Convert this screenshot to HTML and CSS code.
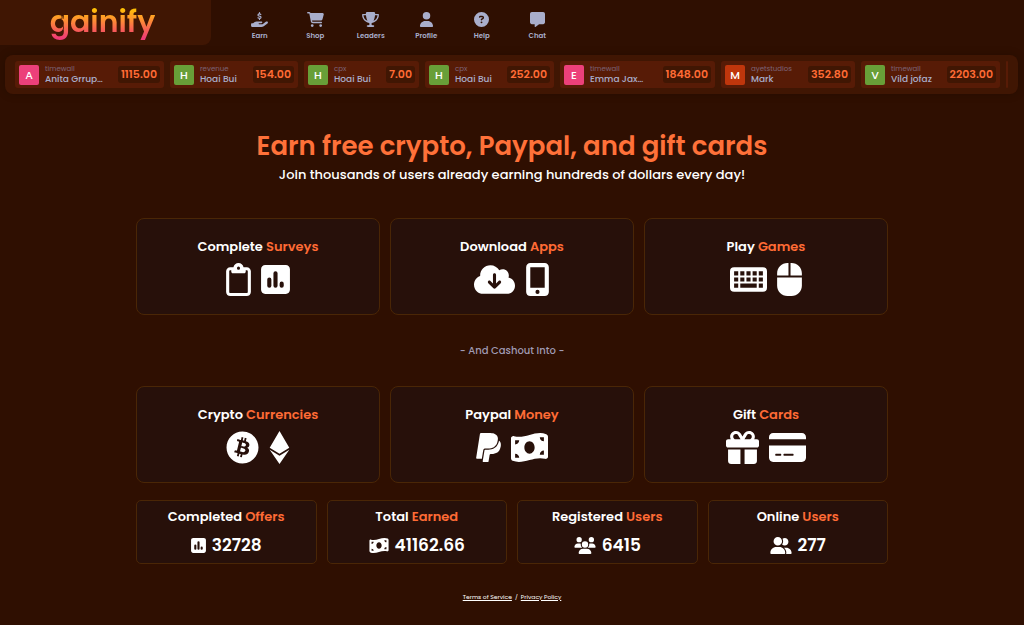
FILE: index.html
```html
<!DOCTYPE html>
<html lang="en">
<head>
<meta charset="utf-8">
<meta name="viewport" content="width=device-width, initial-scale=1">
<title>gainify</title>
<link rel="stylesheet" href="styles.css">
</head>
<body>
<svg class="sprite" aria-hidden="true">
  <symbol id="clipboard" viewBox="0 0 384 512"><path d="M280 64h40c35.300 0 64 28.700 64 64V448c0 35.300-28.700 64-64 64H64c-35.300 0-64-28.700-64-64V128C0 92.700 28.700 64 64 64h49.600C121 27.500 153.300 0 192 0s71 27.500 78.400 64H280zM64 112c-8.800 0-16 7.200-16 16V448c0 8.800 7.200 16 16 16H320c8.800 0 16-7.200 16-16V128c0-8.800-7.200-16-16-16H304v24c0 13.300-10.700 24-24 24H104c-13.300 0-24-10.700-24-24V112H64zm128-8a24 24 0 1 0 0-48 24 24 0 1 0 0 48z"/></symbol>
  <symbol id="poll" viewBox="0 0 448 512"><path fill-rule="evenodd" d="M448 96c0-35.300-28.700-64-64-64H64C28.700 32 0 60.700 0 96V416c0 35.300 28.700 64 64 64H384c35.300 0 64-28.700 64-64V96zM256 160v192a32 32 0 0 1-64 0V160a32 32 0 0 1 64 0zM160 256v96a32 32 0 0 1-64 0v-96a32 32 0 0 1 64 0zM352 320v32a32 32 0 0 1-64 0v-32a32 32 0 0 1 64 0z"/></symbol>
  <symbol id="cloud" viewBox="0 0 640 512"><path fill-rule="evenodd" d="M144 480C64.500 480 0 415.500 0 336c0-62.800 40.200-116.200 96.200-135.900c-.1-2.700-.2-5.400-.2-8.100c0-88.400 71.600-160 160-160c59.300 0 111 32.200 138.700 80.200C409.900 102 428.300 96 448 96c53 0 96 43 96 96c0 12.200-2.300 23.800-6.400 34.600C596 238.400 640 290.100 640 352c0 70.700-57.300 128-128 128H144zm79-167l80 80c9.400 9.400 24.600 9.400 33.900 0l80-80c9.400-9.400 9.400-24.600 0-33.900s-24.600-9.400-33.900 0l-39 39V184c0-13.300-10.700-24-24-24s-24 10.700-24 24V318.100l-39-39c-9.400-9.400-24.600-9.400-33.900 0s-9.400 24.600 0 33.900z"/></symbol>
  <symbol id="phone" viewBox="0 0 384 512"><path fill-rule="evenodd" d="M16 64C16 28.700 44.700 0 80 0H304c35.300 0 64 28.700 64 64V448c0 35.300-28.700 64-64 64H80c-35.300 0-64-28.700-64-64V64zM224 448a32 32 0 1 0-64 0 32 32 0 1 0 64 0zM304 64H80V384H304V64z"/></symbol>
  <symbol id="keyboard" viewBox="0 0 576 512"><path fill-rule="evenodd" d="M64 64H512a64 64 0 0 1 64 64V384a64 64 0 0 1-64 64H64a64 64 0 0 1-64-64V128a64 64 0 0 1 64-64zM64 128v64h64v-64zM160 128v64h64v-64zM256 128v64h64v-64zM352 128v64h64v-64zM448 128v64h64v-64zM64 224v64h64v-64zM160 224v64h64v-64zM256 224v64h64v-64zM352 224v64h64v-64zM448 224v64h64v-64zM64 320v64h64v-64zM160 320v64h256v-64zM448 320v64h64v-64z"/></symbol>
  <symbol id="mouse" viewBox="0 0 384 512"><path d="M0 192H176V0H160C71.600 0 0 71.600 0 160v32zm0 32V352c0 88.400 71.600 160 160 160h64c88.400 0 160-71.600 160-160V224H0zm384-32V160C384 71.600 312.400 0 224 0H208V192H384z"/></symbol>
  <symbol id="bitcoin" viewBox="0 0 512 512"><path d="M504 256c0 136.967-111.033 248-248 248S8 392.967 8 256 119.033 8 256 8s248 111.033 248 248zm-141.651-35.330c4.937-32.999-20.191-50.739-54.550-62.573l11.146-44.702-27.213-6.781-10.851 43.524c-7.154-1.783-14.502-3.464-21.803-5.130l10.929-43.810-27.198-6.781-11.153 44.686c-5.922-1.349-11.735-2.682-17.377-4.084l.031-.14-37.530-9.370-7.239 29.062s20.191 4.627 19.765 4.913c11.022 2.751 13.014 10.044 12.680 15.825l-12.696 50.925c.76.194 1.744.473 2.829.907-.907-.225-1.876-.473-2.876-.713l-17.796 71.338c-1.349 3.348-4.767 8.370-12.471 6.464.271.395-19.780-4.937-19.780-4.937l-13.510 31.147 35.414 8.827c6.588 1.651 13.045 3.379 19.400 5.006l-11.262 45.213 27.182 6.781 11.153-44.733a1038.209 1038.209 0 0 0 21.687 5.627l-11.115 44.523 27.213 6.781 11.262-45.128c46.404 8.781 81.299 5.239 95.986-36.727 11.834-33.790-.589-53.281-25.004-65.991 17.780-4.098 31.174-15.792 34.747-39.949zm-62.177 87.179c-8.410 33.790-65.308 15.523-83.755 10.943l14.944-59.899c18.446 4.603 77.600 13.717 68.811 48.956zm8.417-87.667c-7.673 30.736-55.031 15.120-70.393 11.292l13.548-54.327c15.363 3.828 64.836 10.973 56.845 43.035z"/></symbol>
  <symbol id="ethereum" viewBox="0 0 320 512"><path d="M311.900 260.800L160 353.600 8 260.800 160 0l151.900 260.800zM160 383.400L8 290.600 160 512l152-221.400-152 92.800z"/></symbol>
  <symbol id="paypal" viewBox="0 0 384 512"><path d="M111.400 295.900c-3.500 19.200-17.400 108.700-21.500 134-.3 1.800-1 2.500-3 2.500H12.300c-7.600 0-13.100-6.600-12.100-13.900L58.800 46.600c1.500-9.600 10.100-16.900 20-16.900 152.300 0 165.100-3.700 204 11.400 60.100 23.300 65.600 79.500 44 140.300-21.500 62.600-72.500 89.500-140.100 90.300-43.400.7-69.500-7-75.300 24.200zM357.100 152c-1.800-1.300-2.500-1.800-3 1.300-2 11.400-5.100 22.500-8.800 33.600-39.900 113.800-150.500 103.900-204.500 103.900-6.100 0-10.100 3.300-10.900 9.400-22.600 140.400-27.100 169.700-27.100 169.700-1 7.100 3.500 12.900 10.600 12.900h63.500c8.600 0 15.700-6.300 17.400-14.900.7-5.400-1.100 6.100 14.400-91.300 4.600-22 14.300-19.700 29.300-19.700 71 0 126.400-28.800 142.900-112.300 6.500-34.800 4.600-71.400-23.800-92.600z"/></symbol>
  <symbol id="bill" viewBox="0 0 576 512"><path fill-rule="evenodd" d="M0 112.500V422.300c0 18 10.100 35 27 41.300c87 32.500 174 10.300 261-11.900c79.800-20.300 159.600-40.700 239.300-18.900c23 6.300 48.700-9.500 48.700-33.400V89.700c0-18-10.100-35-27-41.300C462 15.900 375 38.100 288 60.300C208.200 80.600 128.400 100.900 48.700 79.100C25.600 72.800 0 88.600 0 112.500zM288 352c-44.200 0-80-43-80-96s35.800-96 80-96s80 43 80 96s-35.800 96-80 96zM64 352c35.300 0 64 28.700 64 64H64V352zm64-208c0 35.300-28.700 64-64 64V144h64zM512 304v64H448c0-35.300 28.700-64 64-64zM448 96h64v64c-35.300 0-64-28.700-64-64z"/></symbol>
  <symbol id="gift" viewBox="0 0 512 512"><path d="M190.500 68.800L225.300 128H152c-22.100 0-40-17.900-40-40s17.900-40 40-40h2.200c14.900 0 28.800 7.900 36.300 20.800zM64 88c0 14.400 3.500 28 9.600 40H32c-17.700 0-32 14.300-32 32v64c0 17.700 14.300 32 32 32H480c17.700 0 32-14.300 32-32V160c0-17.700-14.300-32-32-32H438.400c6.100-12 9.600-25.600 9.600-40c0-48.600-39.400-88-88-88h-2.200c-31.900 0-61.500 16.900-77.700 44.400L256 85.500l-24.100-41C215.700 16.900 186.100 0 154.200 0H152C103.400 0 64 39.400 64 88zm336 0c0 22.100-17.900 40-40 40H286.700l34.800-59.200C329.100 55.900 342.900 48 357.800 48H360c22.100 0 40 17.900 40 40zM32 288V464c0 26.500 21.500 48 48 48H224V288H32zM288 512H432c26.500 0 48-21.500 48-48V288H288V512z"/></symbol>
  <symbol id="card" viewBox="0 0 576 512"><path fill-rule="evenodd" d="M64 32C28.700 32 0 60.700 0 96v32H576V96c0-35.300-28.700-64-64-64H64zM576 224H0V416c0 35.300 28.700 64 64 64H512c35.300 0 64-28.700 64-64V224zM112 352h64c8.800 0 16 7.200 16 16s-7.200 16-16 16H112c-8.800 0-16-7.200-16-16s7.200-16 16-16zm112 16c0-8.800 7.200-16 16-16H368c8.800 0 16 7.200 16 16s-7.200 16-16 16H240c-8.800 0-16-7.200-16-16z"/></symbol>
  <symbol id="users" viewBox="0 0 640 512"><path d="M144 0a80 80 0 1 1 0 160A80 80 0 1 1 144 0zM512 0a80 80 0 1 1 0 160A80 80 0 1 1 512 0zM0 298.700C0 239.800 47.800 192 106.700 192h42.700c15.900 0 31 3.500 44.600 9.700c-1.300 7.200-1.900 14.700-1.900 22.300c0 38.200 16.800 72.500 43.300 96H21.300C9.600 320 0 310.400 0 298.700zM404.600 320c26.600-23.500 43.300-57.800 43.300-96c0-7.600-.7-15-1.900-22.300c13.600-6.300 28.700-9.700 44.600-9.700h42.700C592.200 192 640 239.800 640 298.700c0 11.800-9.600 21.300-21.300 21.300H404.600zM224 224a96 96 0 1 1 192 0 96 96 0 1 1-192 0zM128 485.300C128 411.700 187.700 352 261.300 352H378.700C452.300 352 512 411.700 512 485.300c0 14.700-11.900 26.700-26.700 26.700H154.700c-14.700 0-26.700-11.900-26.700-26.700z"/></symbol>
  <symbol id="group" viewBox="0 0 640 512"><path d="M96 128a128 128 0 1 1 256 0A128 128 0 1 1 96 128zM0 482.300C0 383.800 79.800 304 178.300 304h91.400C368.200 304 448 383.800 448 482.300c0 16.400-13.300 29.700-29.700 29.700H29.700C13.300 512 0 498.700 0 482.300zM609.300 512H471.400c5.400-9.400 8.600-20.300 8.600-32v-8c0-60.700-27.100-115.200-69.800-151.800c2.400-.1 4.700-.2 7.100-.2h61.400C567.800 320 640 392.200 640 481.300c0 17-13.800 30.700-30.700 30.700zM432 256c-31 0-59-12.600-79.300-32.900C372.400 196.500 384 163.600 384 128c0-26.800-6.600-52.100-18.300-74.300C384.300 40.100 407.200 32 432 32c61.900 0 112 50.100 112 112s-50.100 112-112 112z"/></symbol>
  <symbol id="hand" viewBox="0 0 576 512"><path d="M568.200 336.300c13.100 17.800 9.300 42.800-8.500 55.900L433.100 485.500c-23.400 17.200-51.600 26.500-80.700 26.500H32c-17.700 0-32-14.300-32-32V416c0-17.700 14.300-32 32-32H68.800l44.900-36c22.700-18.200 50.900-28 80-28H352c17.700 0 32 14.300 32 32s-14.300 32-32 32H272c-8.800 0-16 7.200-16 16s7.200 16 16 16H392.600l119.700-88.200c17.800-13.100 42.800-9.300 55.900 8.500z"/><path fill="none" stroke="currentColor" stroke-width="40" stroke-linecap="round" d="M334 82c-14-10-30-16-48-16-60 0-64 56-20 70l46 14c44 16 36 66-22 66-24 0-40-8-56-18M288 20V60M288 220v34"/></symbol>
  <symbol id="cart" viewBox="0 0 576 512"><path d="M0 24C0 10.700 10.700 0 24 0H69.500c22 0 41.500 12.800 50.600 32h411c26.300 0 45.500 25 38.600 50.400l-41 152.300c-8.500 31.400-37 53.300-69.500 53.300H170.700l5.400 28.500c2.200 11.300 12.100 19.500 23.600 19.500H488c13.300 0 24 10.700 24 24s-10.700 24-24 24H199.700c-34.600 0-64.300-24.600-70.700-58.500L77.400 54.500c-.7-3.800-4-6.500-7.900-6.500H24C10.700 48 0 37.300 0 24zM128 464a48 48 0 1 1 96 0 48 48 0 1 1-96 0zm336-48a48 48 0 1 1 0 96 48 48 0 1 1 0-96z"/></symbol>
  <symbol id="trophy" viewBox="0 0 576 512"><path fill-rule="evenodd" d="M400 0H176c-26.500 0-48.100 21.800-47.100 48.200c.2 5.300 .4 10.600 .7 15.800H24C10.700 64 0 74.700 0 88c0 92.600 33.500 157 78.500 200.700c44.300 43.100 98.300 64.800 138.100 75.800c23.400 6.500 39.400 26 39.400 45.600c0 20.900-17 37.900-37.900 37.900H192c-17.700 0-32 14.300-32 32s14.300 32 32 32H384c17.700 0 32-14.300 32-32s-14.300-32-32-32H357.900C337 448 320 431 320 410.100c0-19.600 15.900-39.200 39.400-45.600c39.900-11 93.900-32.700 138.200-75.800C542.500 245 576 180.600 576 88c0-13.300-10.700-24-24-24H446.400c.3-5.200 .5-10.400 .7-15.800C448.100 21.800 426.500 0 400 0zM48.900 112h84.400c9.100 90.100 29.200 150.300 51.900 190.600c-24.900-11-50.800-26.500-73.200-48.300c-32-31.100-58-76-63-142.300zM464.100 254.300c-22.400 21.800-48.300 37.300-73.200 48.300c22.700-40.300 42.800-100.500 51.900-190.600h84.400c-5.100 66.300-31.100 111.200-63 142.300z"/></symbol>
  <symbol id="user" viewBox="0 0 448 512"><path d="M224 256A128 128 0 1 0 224 0a128 128 0 1 0 0 256zm-45.700 48C79.800 304 0 383.800 0 482.300C0 498.700 13.300 512 29.700 512H418.300c16.400 0 29.700-13.300 29.700-29.700C448 383.800 368.200 304 269.700 304H178.300z"/></symbol>
  <symbol id="help" viewBox="0 0 512 512"><path fill-rule="evenodd" d="M256 512A256 256 0 1 0 256 0a256 256 0 1 0 0 512zM169.800 165.300c7.900-22.300 29.100-37.300 52.800-37.300h58.300c34.900 0 63.100 28.300 63.100 63.100c0 22.600-12.100 43.500-31.700 54.800L280 264.400c-.2 13-10.900 23.600-24 23.600c-13.300 0-24-10.700-24-24V250.500c0-8.600 4.600-16.500 12.100-20.800l44.300-25.400c4.700-2.700 7.600-7.700 7.600-13.100c0-8.400-6.800-15.100-15.100-15.100H222.600c-3.400 0-6.400 2.100-7.500 5.300l-.4 1.200c-4.400 12.500-18.200 19-30.600 14.600s-19-18.200-14.600-30.600l.4-1.200zM224 352a32 32 0 1 1 64 0 32 32 0 1 1-64 0z"/></symbol>
  <symbol id="chat" viewBox="0 0 512 512"><path d="M64 0C28.700 0 0 28.700 0 64V352c0 35.300 28.700 64 64 64h96v80c0 6.100 3.400 11.600 8.800 14.300s11.900 2.100 16.800-1.500L309.300 416H448c35.300 0 64-28.700 64-64V64c0-35.300-28.700-64-64-64H64z"/></symbol>
</svg>

<header class="topbar">
  <a class="brand" href="#"><span class="wordmark">gainify<svg class="notch" viewBox="0 0 12 24" aria-hidden="true"><path d="M7 0v4M9 5C5 4 4 8 6 10s4 5 1 8-5 1-6 3"/></svg></span></a>
  <nav class="nav" aria-label="Main">
    <a href="#"><svg class="glyph wide"><use href="#hand"/></svg>Earn</a>
    <a href="#"><svg class="glyph wide"><use href="#cart"/></svg>Shop</a>
    <a href="#"><svg class="glyph wide"><use href="#trophy"/></svg>Leaders</a>
    <a href="#"><svg class="glyph"><use href="#user"/></svg>Profile</a>
    <a href="#"><svg class="glyph"><use href="#help"/></svg>Help</a>
    <a href="#"><svg class="glyph"><use href="#chat"/></svg>Chat</a>
  </nav>
</header>

<section class="feed" aria-label="Recent earnings">
  <div class="feed-track">
    <article class="entry"><span class="avatar pink">A</span><div class="who"><small>timewall</small><span>Anita Grrup…</span></div><b>1115.00</b></article>
    <article class="entry"><span class="avatar green">H</span><div class="who"><small>revenue</small><span>Hoai Bui</span></div><b>154.00</b></article>
    <article class="entry"><span class="avatar green">H</span><div class="who"><small>cpx</small><span>Hoai Bui</span></div><b>7.00</b></article>
    <article class="entry"><span class="avatar green">H</span><div class="who"><small>cpx</small><span>Hoai Bui</span></div><b>252.00</b></article>
    <article class="entry"><span class="avatar pink">E</span><div class="who"><small>timewall</small><span>Emma Jax…</span></div><b>1848.00</b></article>
    <article class="entry"><span class="avatar red">M</span><div class="who"><small>ayetstudios</small><span>Mark</span></div><b>352.80</b></article>
    <article class="entry"><span class="avatar green">V</span><div class="who"><small>timewall</small><span>Vild jofaz</span></div><b>2203.00</b></article>
    <div class="entry-edge"></div>
  </div>
</section>

<main class="content">
  <div class="hero">
    <h1>Earn free crypto, Paypal, and gift cards</h1>
    <p>Join thousands of users already earning hundreds of dollars every day!</p>
  </div>

  <div class="cards">
    <section class="panel"><h2>Complete <em>Surveys</em></h2><div class="icons"><svg class="w25"><use href="#clipboard"/></svg><svg class="w29"><use href="#poll"/></svg></div></section>
    <section class="panel"><h2>Download <em>Apps</em></h2><div class="icons"><svg class="w41"><use href="#cloud"/></svg><svg class="w25"><use href="#phone"/></svg></div></section>
    <section class="panel"><h2>Play <em>Games</em></h2><div class="icons"><svg class="w37"><use href="#keyboard"/></svg><svg class="w25"><use href="#mouse"/></svg></div></section>
  </div>

  <p class="divider">- And Cashout Into -</p>

  <div class="cards">
    <section class="panel"><h2>Crypto <em>Currencies</em></h2><div class="icons"><svg class="w33"><use href="#bitcoin"/></svg><svg class="w21"><use href="#ethereum"/></svg></div></section>
    <section class="panel"><h2>Paypal <em>Money</em></h2><div class="icons"><svg class="w25"><use href="#paypal"/></svg><svg class="w37"><use href="#bill"/></svg></div></section>
    <section class="panel"><h2>Gift <em>Cards</em></h2><div class="icons"><svg class="w33"><use href="#gift"/></svg><svg class="w37"><use href="#card"/></svg></div></section>
  </div>

  <div class="stats">
    <section class="panel stat"><h2>Completed <em>Offers</em></h2><p><svg class="w15"><use href="#poll"/></svg>32728</p></section>
    <section class="panel stat"><h2>Total <em>Earned</em></h2><p><svg class="w20"><use href="#bill"/></svg>41162.66</p></section>
    <section class="panel stat"><h2>Registered <em>Users</em></h2><p><svg class="w22"><use href="#users"/></svg>6415</p></section>
    <section class="panel stat"><h2>Online <em>Users</em></h2><p><svg class="w22"><use href="#group"/></svg>277</p></section>
  </div>
</main>

<footer class="footer"><a href="#">Terms of Service</a><span>/</span><a href="#">Privacy Policy</a></footer>
</body>
</html>
```
FILE: styles.css
```css
* { box-sizing: border-box; }
body {
  margin: 0;
  background: #2f0f01;
  color: #fff;
  font-family: Poppins, Inter, "Liberation Sans", sans-serif;
  font-weight: 500;
}
h1, h2, p { margin: 0; }
svg { fill: currentColor; display: block; flex: none; }
a { color: inherit; }
.sprite { position: absolute; width: 0; height: 0; }

.topbar { display: flex; height: 45px; gap: 21px; }
.brand {
  width: 211px;
  display: flex;
  align-items: center;
  justify-content: center;
  padding: 0 6px 2px 0;
  background: #401603;
  border-radius: 0 0 8px 0;
  text-decoration: none;
}
.wordmark {
  position: relative;
  font-size: 30px;
  line-height: 45px;
  font-weight: 600;
  color: transparent;
  background: linear-gradient(#ffc400 20%, #ff9a2b 42%, #f86054 68%, #f03a78 88%);
  -webkit-background-clip: text;
  background-clip: text;
}
.notch {
  position: absolute;
  left: 5px;
  top: 14px;
  width: 12px;
  height: 24px;
  fill: none;
  stroke: #401603;
  stroke-width: 1;
}
.nav { display: grid; grid-template-columns: repeat(6, 1fr); width: 333px; padding-top: 12px; color: #a9aecb; }
.nav a {
  display: flex;
  flex-direction: column;
  align-items: center;
  gap: 4px;
  font-size: 7px;
  line-height: 10px;
  font-weight: 600;
  text-decoration: none;
}
.glyph { width: 15px; height: 15px; }
.glyph.wide { width: 17px; }

.feed {
  margin: 10px 6px 0 5px;
  padding: 6px 10px;
  background: #401603;
  border-radius: 8px;
  box-shadow: 0 0 10px rgba(0, 0, 0, .2);
}
.feed-track {
  display: grid;
  grid-template-columns: 149fr 128fr 115fr 129fr 155fr 134fr 139fr 2px;
  gap: 6px;
}
.entry, .entry-edge { background: #571b06; border-radius: 3px; }
.entry { display: flex; align-items: center; gap: 6px; height: 27px; padding: 0 4px; min-width: 0; }
.avatar {
  width: 20px;
  height: 20px;
  border-radius: 2px;
  font-size: 11px;
  line-height: 20px;
  text-align: center;
  flex: none;
}
.pink { background: #ec407a; }
.green { background: #689f38; }
.red { background: #bf360c; }
.who { flex: 1; min-width: 0; display: flex; flex-direction: column; color: #a9aecb; font-size: 9px; line-height: 11px; white-space: nowrap; }
.who small { color: #7c6478; font-size: 7px; line-height: 10px; font-weight: 400; }
.entry b { padding: 0 3px; border-radius: 3px; background: #401603; color: #ff6b35; font-size: 11px; line-height: 17px; font-weight: 600; }

.content { max-width: 752px; margin: 0 auto; padding-top: 32px; }
.hero { text-align: center; }
.hero h1 { color: #ff7139; font-size: 26px; line-height: 40px; font-weight: 600; }
.hero p { font-size: 13px; line-height: 18px; }
.cards, .stats { display: grid; gap: 10px; }
.cards { grid-template-columns: repeat(3, 1fr); }
.hero + .cards { margin-top: 34px; }
.panel {
  display: flex;
  flex-direction: column;
  align-items: center;
  background: #27100a;
  border: 1px solid #4a2606;
  border-radius: 8px;
  padding: 18px 8px;
}
.panel h2 { font-size: 13px; line-height: 20px; font-weight: 600; }
.panel em { font-style: normal; color: #ff6b35; }
.icons { display: flex; justify-content: center; gap: 10px; margin-top: 6px; }
.icons svg { height: 33px; }
.w15 { width: 15px; } .w20 { width: 20px; } .w21 { width: 21px; } .w22 { width: 22px; }
.w25 { width: 25px; } .w29 { width: 29px; } .w33 { width: 33px; } .w37 { width: 37px; } .w41 { width: 41px; }
.divider { padding: 27px 0; text-align: center; color: #a09bb4; font-size: 10px; line-height: 17px; }
.stats { grid-template-columns: repeat(4, 1fr); margin-top: 17px; }
.stat { padding: 6px 6px 5px; border-radius: 5px; }
.stat p { display: flex; align-items: center; gap: 6px; margin-top: 6px; font-size: 17px; line-height: 25px; font-weight: 600; }
.stat svg { height: 17px; }
.footer { display: flex; justify-content: center; gap: 3px; padding: 28px 0 22px; font-size: 6px; line-height: 10px; font-weight: 400; }
```
